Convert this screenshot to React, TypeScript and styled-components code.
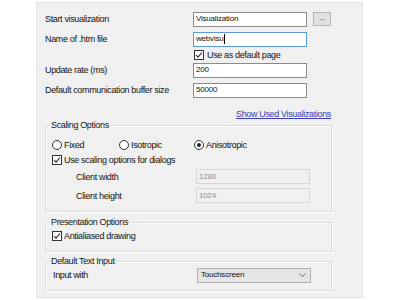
import styled, { createGlobalStyle } from "styled-components";

const GlobalStyle = createGlobalStyle`
  html, body {
    margin: 0;
    padding: 0;
    background: #ffffff;
  }
  body {
    font-family: "Liberation Sans", Arial, sans-serif;
    font-size: 9px;
    letter-spacing: -0.35px;
    line-height: 12px;
    color: #111111;
  }
`;

const Page = styled.div`
  width: 400px;
  height: 300px;
  overflow: hidden;
  padding: 2px 0 0 36px;
  box-sizing: border-box;
`;

const Panel = styled.div`
  width: 327px;
  height: 296px;
  box-sizing: border-box;
  background: #f0f0f0;
  border: 1px solid #e4e4e4;
  padding: 6px 0 0 8px;
  display: flex;
  flex-direction: column;
`;

const FormRow = styled.div<{ $h?: number }>`
  display: grid;
  grid-template-columns: 148px auto;
  align-items: center;
  height: ${(p) => p.$h ?? 20}px;
`;

const Label = styled.span`
  white-space: nowrap;
`;

const Field = styled.div`
  display: flex;
  align-items: center;
  gap: 6px;
`;

const TextBox = styled.div<{ $focused?: boolean; $disabled?: boolean }>`
  width: 114px;
  height: 15px;
  box-sizing: border-box;
  background: ${(p) => (p.$disabled ? "#f0f0f0" : "#ffffff")};
  border: 1px solid
    ${(p) => (p.$focused ? "#5a9ad6" : p.$disabled ? "#d6d6d6" : "#8a8a8a")};
  color: ${(p) => (p.$disabled ? "#8f8f8f" : "#111111")};
  padding: 0 2px;
  display: flex;
  align-items: center;
  font-size: 8px;
  letter-spacing: -0.2px;
  white-space: nowrap;
`;

const Caret = styled.span`
  display: inline-block;
  width: 1px;
  height: 10px;
  background: #000;
`;

const SmallButton = styled.div`
  width: 18px;
  height: 14px;
  box-sizing: border-box;
  background: #e1e1e1;
  border: 1px solid #b4b4b4;
  display: flex;
  align-items: center;
  justify-content: center;
  font-size: 8px;
  color: #444;
  padding-bottom: 2px;
`;

const CheckRow = styled.div<{ $h?: number; $gap?: number }>`
  display: flex;
  align-items: center;
  gap: ${(p) => p.$gap ?? 2}px;
  height: ${(p) => p.$h ?? 12}px;
  white-space: nowrap;
`;

const Box = styled.span`
  width: 10px;
  height: 10px;
  box-sizing: border-box;
  border: 1px solid #333;
  background: #fff;
  display: flex;
  align-items: center;
  justify-content: center;
`;

const Radio = styled.span<{ $on?: boolean }>`
  width: 10px;
  height: 10px;
  box-sizing: border-box;
  border: 1px solid #333;
  border-radius: 50%;
  background: #fff;
  display: flex;
  align-items: center;
  justify-content: center;
  &::after {
    content: "";
    display: ${(p) => (p.$on ? "block" : "none")};
    width: 4px;
    height: 4px;
    border-radius: 50%;
    background: #222;
  }
`;

const LinkRow = styled.div`
  display: flex;
  justify-content: flex-end;
  width: 286px;
  margin-top: 8px;
  height: 12px;
`;

const Link = styled.span`
  color: #3b3bb8;
  text-decoration: underline;
`;

const Group = styled.fieldset<{ $top: number; $pt: number; $pb: number }>`
  margin: ${(p) => p.$top}px 0 0 0;
  width: 287px;
  box-sizing: border-box;
  border: 1px solid #d9d9d9;
  box-shadow: inset 1px 1px 0 #ffffff, 1px 1px 0 #ffffff;
  padding: ${(p) => p.$pt}px 6px ${(p) => p.$pb}px 6px;
  display: flex;
  flex-direction: column;
`;

const Legend = styled.legend`
  padding: 0 1px;
  margin-left: -2px;
  line-height: 12px;
`;

const RadioLine = styled.div`
  display: flex;
  align-items: center;
  height: 16px;
`;

const RadioOption = styled.div<{ $w: number }>`
  width: ${(p) => p.$w}px;
  display: flex;
  align-items: center;
  gap: 2px;
`;

const SubRow = styled.div`
  display: grid;
  grid-template-columns: 120px auto;
  align-items: center;
  padding-left: 24px;
  height: 19px;
`;

const Select = styled.div`
  width: 114px;
  height: 15px;
  box-sizing: border-box;
  background: #e5e5e5;
  border: 1px solid #b0b0b0;
  display: flex;
  align-items: center;
  justify-content: space-between;
  padding: 0 4px 0 3px;
  font-size: 8px;
  letter-spacing: -0.2px;
`;

const InputRow = styled.div`
  display: grid;
  grid-template-columns: 144px auto;
  align-items: center;
  height: 16px;
  padding-left: 1px;
`;

function Check() {
  return (
    <Box>
      <svg width="8" height="8" viewBox="0 0 8 8">
        <path d="M1 4 L3 6.2 L7 1.5" fill="none" stroke="#222" strokeWidth="1.1" />
      </svg>
    </Box>
  );
}

export default function App() {
  return (
    <>
      <GlobalStyle />
      <Page>
        <Panel>
          <FormRow>
            <Label>Start visualization</Label>
            <Field>
              <TextBox>Visualization</TextBox>
              <SmallButton>...</SmallButton>
            </Field>
          </FormRow>
          <FormRow>
            <Label>Name of .htm file</Label>
            <TextBox $focused>
              webvisu
              <Caret />
            </TextBox>
          </FormRow>
          <FormRow $h={11}>
            <span />
            <CheckRow $gap={3} style={{ paddingLeft: 1 }}>
              <Check />
              Use as default page
            </CheckRow>
          </FormRow>
          <FormRow>
            <Label>Update rate (ms)</Label>
            <TextBox>200</TextBox>
          </FormRow>
          <FormRow>
            <Label>Default communication buffer size</Label>
            <TextBox>50000</TextBox>
          </FormRow>
          <LinkRow>
            <Link>Show Used Visualizations</Link>
          </LinkRow>

          <Group $top={-1} $pt={6} $pb={6}>
            <Legend>Scaling Options</Legend>
            <RadioLine>
              <RadioOption $w={67}>
                <Radio />
                Fixed
              </RadioOption>
              <RadioOption $w={75}>
                <Radio />
                Isotropic
              </RadioOption>
              <RadioOption $w={90}>
                <Radio $on />
                Anisotropic
              </RadioOption>
            </RadioLine>
            <CheckRow $h={14}>
              <Check />
              Use scaling options for dialogs
            </CheckRow>
            <SubRow>
              <Label>Client width</Label>
              <TextBox $disabled>1280</TextBox>
            </SubRow>
            <SubRow>
              <Label>Client height</Label>
              <TextBox $disabled>1024</TextBox>
            </SubRow>
          </Group>

          <Group $top={4} $pt={2} $pb={9}>
            <Legend>Presentation Options</Legend>
            <CheckRow>
              <Check />
              Antialiased drawing
            </CheckRow>
          </Group>

          <Group $top={3} $pt={0} $pb={7}>
            <Legend>Default Text Input</Legend>
            <InputRow>
              <Label>Input with</Label>
              <Select>
                Touchscreen
                <svg width="7" height="4" viewBox="0 0 7 4">
                  <path d="M0.5 0.5 L3.5 3.5 L6.5 0.5" fill="none" stroke="#666" strokeWidth="1" />
                </svg>
              </Select>
            </InputRow>
          </Group>
        </Panel>
      </Page>
    </>
  );
}
